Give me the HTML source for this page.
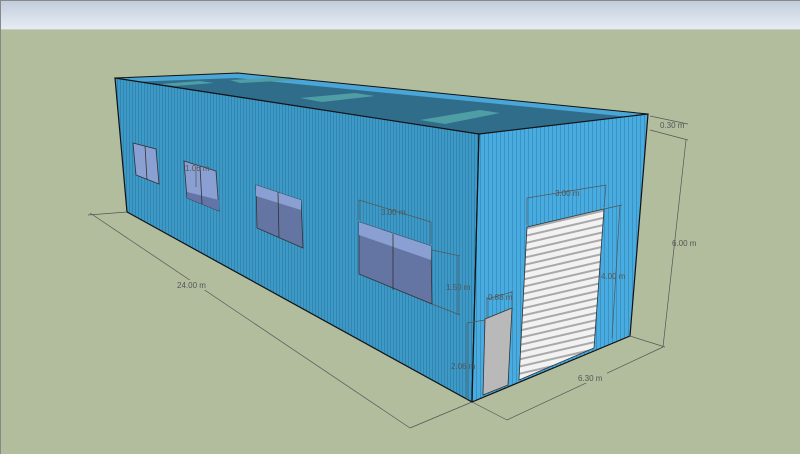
<!DOCTYPE html>
<html><head><meta charset="utf-8"><style>
html,body{margin:0;padding:0;width:800px;height:454px;overflow:hidden;background:#b2bd9e}
svg{display:block}
text{font-family:"Liberation Sans",sans-serif;font-size:8px;fill:#555}
</style></head><body>
<svg width="800" height="454" viewBox="0 0 800 454" xmlns="http://www.w3.org/2000/svg">
<defs>
<linearGradient id="sky" x1="0" y1="0" x2="0" y2="1"><stop offset="0" stop-color="#c0ccdb"/><stop offset="1" stop-color="#e7ecf4"/></linearGradient>
<pattern id="ribL" width="3" height="10" patternUnits="userSpaceOnUse"><rect width="3" height="10" fill="#3d99c6"/><rect width="1" height="10" fill="#3285b0"/></pattern>
<pattern id="ribF" width="4" height="10" patternUnits="userSpaceOnUse"><rect width="4" height="10" fill="#49ace0"/><rect width="1" height="10" fill="#3a93c4"/></pattern>
<pattern id="roll" width="10" height="7" patternUnits="userSpaceOnUse" patternTransform="rotate(-13)"><rect width="10" height="7" fill="#f2f2f2"/><rect y="4" width="10" height="2" fill="#a9a9a9"/></pattern>
</defs>
<rect x="0" y="0" width="800" height="29" fill="url(#sky)"/>
<rect x="0" y="29" width="800" height="1" fill="#c8cfbf"/>
<rect x="0" y="0" width="800" height="1" fill="#888"/>
<rect x="0" y="0" width="1" height="454" fill="#888"/>
<!-- roof -->
<polygon points="115,78 238,73 648,114 479,134" fill="#2f6d8b"/>
<polygon points="238,73 648,114 640,118 236,78 130,82 115,78" fill="#4aa6d6"/>
<polygon points="160,84 200,81 214,83 175,86" fill="#4f9ea6"/>
<polygon points="300,98 355,93 375,96 322,102" fill="#4f9ea6"/>
<polygon points="420,120 480,110 500,113 445,124" fill="#4f9ea6"/>
<polygon points="230,80 290,77 300,80 240,83" fill="#4f9ea6"/>
<!-- long face -->
<polygon points="115,78 479,134 472,402 127,212" fill="url(#ribL)" stroke="#111" stroke-width="1.2"/>
<!-- front face -->
<polygon points="479,134 648,114 630,336 472,402" fill="url(#ribF)" stroke="#111" stroke-width="1.2"/>
<polyline points="115,78 238,73 648,114" fill="none" stroke="#111" stroke-width="1"/>
<!-- windows -->
<g stroke="#333" stroke-width="0.8">
<polygon points="133,143 156,149 159,184 136,175" fill="#8a9fd2"/>
<line x1="145" y1="146" x2="147" y2="180"/>
<polygon points="184,161 216,171 219,211 187,198" fill="#8a9fd2"/>
<polygon points="187,192 219,200 219,211 187,198" fill="#6275a6" stroke="none"/>
<line x1="200" y1="166" x2="202" y2="204"/>
<polygon points="256,185 301,200 303,248 257,228" fill="#6575a3"/>
<polygon points="256,185 301,200 301,210 256,196" fill="#8a9fd2" stroke="none"/>
<line x1="278" y1="192" x2="279" y2="238"/>
<polygon points="359,222 431,246 432,304 359,274" fill="#6575a3"/>
<polygon points="359,222 431,246 431,260 359,235" fill="#8a9fd2" stroke="none"/>
<line x1="393" y1="234" x2="393" y2="290"/>
</g>
<!-- doors -->
<polygon points="485,319 512,308 508,385 483,395" fill="#b9b9b9" stroke="#333" stroke-width="0.8"/>
<polygon points="527,227 604,209 594,348 519,380" fill="url(#roll)" stroke="#333" stroke-width="0.8"/>
<!-- dimensions -->
<g stroke="#555" stroke-width="0.7" fill="none">
<line x1="90" y1="213" x2="410" y2="428"/>
<line x1="127" y1="212" x2="88" y2="215"/>
<line x1="472" y1="402" x2="410" y2="428"/>
<line x1="507" y1="420" x2="663" y2="347"/>
<line x1="472" y1="402" x2="507" y2="420"/>
<line x1="630" y1="336" x2="665" y2="347"/>
<line x1="686" y1="140" x2="663" y2="347"/>
<line x1="650" y1="130" x2="688" y2="140"/>
<line x1="650" y1="116" x2="688" y2="124"/>
<line x1="527" y1="198" x2="606" y2="185"/>
<line x1="527" y1="198" x2="527" y2="225"/>
<line x1="606" y1="185" x2="604" y2="207"/>
<line x1="620" y1="205" x2="612" y2="338"/>
<line x1="604" y1="209" x2="622" y2="205"/>
<line x1="359" y1="200" x2="431" y2="222"/>
<line x1="359" y1="200" x2="359" y2="220"/>
<line x1="431" y1="222" x2="431" y2="244"/>
<line x1="458" y1="256" x2="458" y2="315"/>
<line x1="432" y1="250" x2="460" y2="256"/>
<line x1="432" y1="304" x2="460" y2="315"/>
<line x1="467" y1="323" x2="467" y2="400"/>
<line x1="467" y1="323" x2="485" y2="320"/>
<line x1="487" y1="297" x2="487" y2="318"/>
<line x1="512" y1="291" x2="512" y2="307"/>
<line x1="487" y1="299" x2="512" y2="292"/>
<line x1="196" y1="170" x2="196" y2="187"/>
</g>
<rect x="170" y="280" width="40" height="10" fill="#b2bd9e"/>
<text x="177" y="288">24.00 m</text>
<rect x="575" y="373" width="32" height="10" fill="#b2bd9e"/>
<text x="578" y="381">6.30 m</text>
<text x="672" y="246">6.00 m</text>
<text x="660" y="128">0.30 m</text>
<text x="601" y="279">4.00 m</text>
<text x="555" y="196">3.00 m</text>
<text x="381" y="215">3.00 m</text>
<text x="446" y="290">1.50 m</text>
<text x="488" y="300">0.88 m</text>
<text x="451" y="369">2.06 m</text>
<text x="185" y="171">1.06 m</text>
</svg>
</body></html>
